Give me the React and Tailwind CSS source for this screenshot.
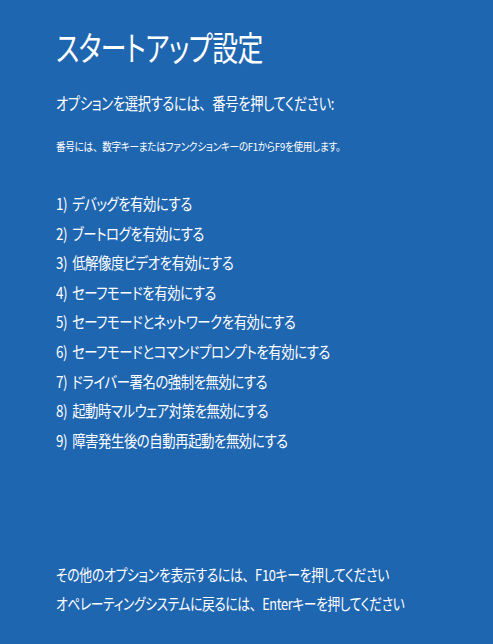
function J({ text }) {
  const parts = text.split("、");
  return (
    <>
      {parts.map((p, i) => (
        <span key={i}>
          {p}
          {i < parts.length - 1 && (
            <span className="[font-feature-settings:normal]">、</span>
          )}
        </span>
      ))}
    </>
  );
}

export default function App() {
  const items = [
    "デバッグを有効にする",
    "ブートログを有効にする",
    "低解像度ビデオを有効にする",
    "セーフモードを有効にする",
    "セーフモードとネットワークを有効にする",
    "セーフモードとコマンドプロンプトを有効にする",
    "ドライバー署名の強制を無効にする",
    "起動時マルウェア対策を無効にする",
    "障害発生後の自動再起動を無効にする",
  ];
  return (
    <div className="w-[493px] h-[644px] bg-[#1f66b1] text-white flex flex-col pl-[56px] overflow-hidden [font-feature-settings:'palt'] font-['Noto_Sans_CJK_JP',sans-serif]">
      <h1 className="mt-[23px] text-[34px] leading-[48px] font-normal tracking-[-0.6px] whitespace-nowrap origin-left scale-x-[0.76]">
        スタートアップ設定
      </h1>
      <p className="mt-[20px] text-[16.5px] leading-[24px] tracking-[-0.4px] whitespace-nowrap origin-left scale-x-[0.805]">
        <J text="オプションを選択するには、番号を押してください:" />
      </p>
      <p className="mt-[22px] text-[11px] leading-[18px] tracking-[-0.3px] whitespace-nowrap origin-left scale-x-[0.87]">
        <J text="番号には、数字キーまたはファンクションキーのF1からF9を使用します。" />
      </p>
      <ul className="mt-[34px] flex flex-col">
        {items.map((t, i) => (
          <li
            key={t}
            className="text-[16px] leading-[29.6px] tracking-[-0.5px] whitespace-nowrap origin-left scale-x-[0.835]"
          >
            <span className="mr-[6px]">{i + 1})</span>
            {t}
          </li>
        ))}
      </ul>
      <div className="mt-auto mb-[26px] flex flex-col">
        <p className="text-[15.5px] leading-[29px] tracking-[-0.4px] whitespace-nowrap origin-left scale-x-[0.83]">
          <J text="その他のオプションを表示するには、F10キーを押してください" />
        </p>
        <p className="text-[15.5px] leading-[29px] tracking-[-0.4px] whitespace-nowrap origin-left scale-x-[0.82]">
          <J text="オペレーティングシステムに戻るには、Enterキーを押してください" />
        </p>
      </div>
    </div>
  );
}
